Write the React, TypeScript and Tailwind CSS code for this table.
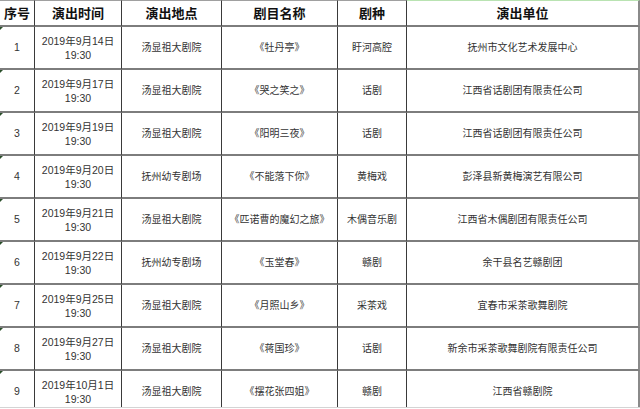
import React from "react";

type Row = {
  no: string;
  date: string;
  place: string;
  title: string;
  genre: string;
  troupe: string;
};

const rows: Row[] = [
  { no: "1", date: "2019年9月14日", place: "汤显祖大剧院", title: "《牡丹亭》", genre: "盱河高腔", troupe: "抚州市文化艺术发展中心" },
  { no: "2", date: "2019年9月17日", place: "汤显祖大剧院", title: "《哭之笑之》", genre: "话剧", troupe: "江西省话剧团有限责任公司" },
  { no: "3", date: "2019年9月19日", place: "汤显祖大剧院", title: "《阳明三夜》", genre: "话剧", troupe: "江西省话剧团有限责任公司" },
  { no: "4", date: "2019年9月20日", place: "抚州幼专剧场", title: "《不能落下你》", genre: "黄梅戏", troupe: "彭泽县新黄梅演艺有限公司" },
  { no: "5", date: "2019年9月21日", place: "汤显祖大剧院", title: "《匹诺曹的魔幻之旅》", genre: "木偶音乐剧", troupe: "江西省木偶剧团有限责任公司" },
  { no: "6", date: "2019年9月22日", place: "抚州幼专剧场", title: "《玉堂春》", genre: "赣剧", troupe: "余干县名艺赣剧团" },
  { no: "7", date: "2019年9月25日", place: "汤显祖大剧院", title: "《月照山乡》", genre: "采茶戏", troupe: "宜春市采茶歌舞剧院" },
  { no: "8", date: "2019年9月27日", place: "汤显祖大剧院", title: "《蒋国珍》", genre: "话剧", troupe: "新余市采茶歌舞剧院有限责任公司" },
  { no: "9", date: "2019年10月1日", place: "汤显祖大剧院", title: "《摆花张四姐》", genre: "赣剧", troupe: "江西省赣剧院" },
];

const headers = ["序号", "演出时间", "演出地点", "剧目名称", "剧种", "演出单位"];

const cell = "flex items-center justify-center text-center border-r border-r-[#3a3a3a] border-b-2 border-b-[#7d7d7d]";

const App = () => {
  return (
    <div className="w-[640px] h-[408px] overflow-hidden bg-white border-b border-[#d4d4d4]">
      <div
        className="grid grid-cols-[35px_87px_100px_116px_69px_233px]"
        style={{ fontFamily: '"Liberation Sans", "Noto Sans CJK SC", sans-serif' }}
      >
        {/* header */}
        {headers.map((h, i) => (
          <div
            key={h}
            className={`${cell} h-[27px] text-[13px] font-bold text-[#111] border-t ${
              i === 5 ? "border-t-[#b9e3b2] border-r-2 border-r-[#8a8a8a]" : "border-t-[#a0a0a0]"
            }`}
            style={{ fontFamily: '"Noto Sans CJK SC", serif' }}
          >
            {h}
          </div>
        ))}

        {/* body */}
        {rows.map((r) => (
          <React.Fragment key={r.no}>
            <div className={`${cell} relative h-[43px] text-[10.5px] text-[#333]`}>
              {/* excel error marker */}
              <span className="absolute left-0 top-0 w-0 h-0 border-t-[3px] border-t-[#2a4f2a] border-r-[3px] border-r-transparent" />
              {r.no}
            </div>
            <div className={`${cell} h-[43px] flex-col text-[10.5px] leading-[14px] text-[#333]`}>
              <span>{r.date}</span>
              <span>19:30</span>
            </div>
            <div className={`${cell} h-[43px] text-[10px] text-[#333]`}>{r.place}</div>
            <div className={`${cell} h-[43px] text-[10px] text-[#333]`}>{r.title}</div>
            <div className={`${cell} h-[43px] text-[10px] text-[#333]`}>{r.genre}</div>
            <div className={`${cell} h-[43px] text-[10px] text-[#333] border-r-2 border-r-[#8a8a8a]`}>
              {r.troupe}
            </div>
          </React.Fragment>
        ))}
      </div>
    </div>
  );
};

export default App;
